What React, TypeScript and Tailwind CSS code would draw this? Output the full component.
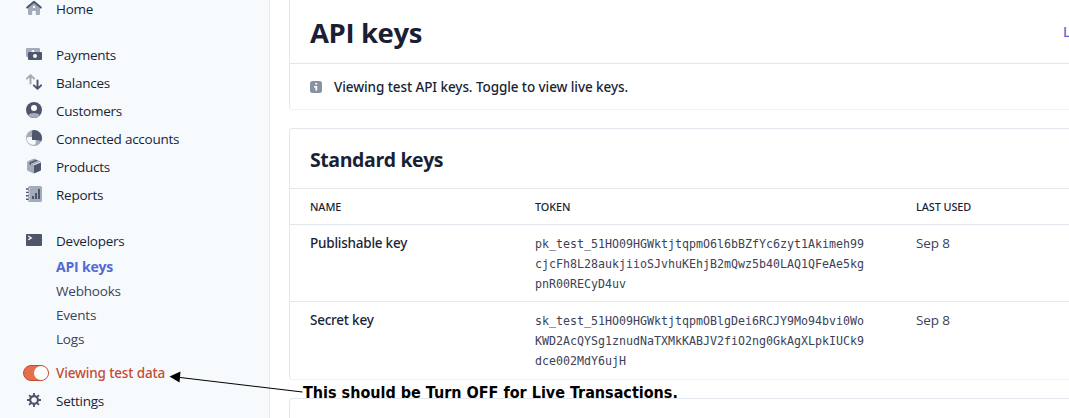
import type { ReactNode } from "react";

const DARK = "#4f566b";
const LIGHT = "#a3acb9";

function Icon({ children }: { children: ReactNode }) {
  return (
    <svg className="mb-0.5 h-4 w-4 shrink-0" viewBox="0 0 16 16" fill="none">
      {children}
    </svg>
  );
}

const HomeIcon = () => (
  <Icon>
    <path d="M2 7.500 8 2.500l6 5V14a1 1 0 0 1-1 1H9.800v-4H6.200v4H3a1 1 0 0 1-1-1z" fill={LIGHT} />
    <rect x="7" y="6" width="2" height="2" fill="#f7fafc" />
    <path d="M1.200 7.600 8 1.800l6.800 5.800" stroke={DARK} strokeWidth="2" strokeLinecap="round" strokeLinejoin="round" />
  </Icon>
);

const PaymentsIcon = () => (
  <Icon>
    <path d="M1 2h12a1 1 0 0 1 1 1v3H2v5H1a1 1 0 0 1-1-1V3a1 1 0 0 1 1-1z" fill={LIGHT} />
    <circle cx="7" cy="5.600" r="1.600" fill="#f7fafc" />
    <rect x="2" y="6" width="14" height="8" rx="1" fill={DARK} />
    <circle cx="9" cy="10" r="2" fill="#f7fafc" />
  </Icon>
);

const BalancesIcon = () => (
  <Icon>
    <path d="M4.500 9.500V1.300M.9 4.600l3.600-3.500 3.600 3.500" stroke={LIGHT} strokeWidth="2" strokeLinecap="round" strokeLinejoin="round" />
    <path d="M11.500 6.500v8.200M7.900 11.400l3.600 3.500 3.600-3.500" stroke={DARK} strokeWidth="2" strokeLinecap="round" strokeLinejoin="round" />
  </Icon>
);

const CustomersIcon = () => (
  <Icon>
    <circle cx="8" cy="8" r="8" fill={DARK} />
    <path d="M2 13.300C3.300 11.800 5.500 11 8 11s4.700.8 6 2.300A8 8 0 0 1 8 16a8 8 0 0 1-6-2.700z" fill={LIGHT} />
    <circle cx="8" cy="6" r="3" fill="#f7fafc" />
  </Icon>
);

const ConnectedIcon = () => (
  <Icon>
    <circle cx="8" cy="8" r="8" fill={LIGHT} />
    <path d="M.8 7.500C2 6.800 4 6.800 6 7.300V10h3.500c.5 2 .3 3.700-.7 4.700C4 15.400.3 12 .8 7.500z" fill="#f7fafc" />
    <path d="M6.500.2A8 8 0 0 1 15.300 11.200C13.500 10.600 12 10 9.500 10H6V5C6 3 6.100 1.500 6.500.2z" fill={DARK} />
  </Icon>
);

const ProductsIcon = () => (
  <Icon>
    <path d="M8 .5 15 3.500 8 6.600 1 3.500z" fill={LIGHT} />
    <path d="M1 3.500 8 6.600v8.900L1.600 12.700a1 1 0 0 1-.6-1z" fill={LIGHT} />
    <path d="M15 4 8 7v8.500l6.400-2.800a1 1 0 0 0 .6-1z" fill={DARK} />
    <path d="M3.300 6.300V4.600L9.800 1.700l2 .8L5 5.500v1.600z" fill={DARK} />
    <path d="M8 7 15 4" stroke="#f7fafc" strokeWidth=".6" />
  </Icon>
);

const ReportsIcon = () => (
  <Icon>
    <rect x="2" y="0" width="14" height="16" rx="1.500" fill={LIGHT} />
    <path d="M1.500 2h2v2h-2zM1.500 5.400h2v2h-2zM1.500 8.800h2v2h-2zM1.500 12.200h2v2h-2z" fill="#f7fafc" />
    <path d="M0 3h2.800M0 6.400h2.800M0 9.800h2.800M0 13.200h2.800" stroke={DARK} strokeWidth="1.400" />
    <path d="M6 10h2v3H6zM9 7h2v6H9zM12 3h2v10h-2z" fill={DARK} />
  </Icon>
);

const DevelopersIcon = () => (
  <Icon>
    <rect x="0" y="2" width="16" height="12" rx="1" fill={DARK} />
    <path d="m2.300 4 3 1.900-3 1.900" stroke="#f7fafc" strokeWidth="1.300" />
  </Icon>
);

const SettingsIcon = () => (
  <Icon>
    <circle cx="8" cy="8" r="3.900" stroke={DARK} strokeWidth="2.200" />
    <path
      d="M8 1v3M8 12v3M1 8h3M12 8h3M3.050 3.050l2.100 2.100M10.850 10.850l2.100 2.100M12.950 3.050l-2.100 2.100M5.150 10.850l-2.100 2.100"
      stroke={DARK}
      strokeWidth="1.900"
    />
  </Icon>
);

function NavItem({ icon, label }: { icon: ReactNode; label: string }) {
  return (
    <a className="flex h-7 items-center gap-[14px] pl-[26px] font-['Open_Sans',sans-serif] text-[13.5px] tracking-[-0.25px] text-[#1a1f36]">
      {icon}
      <span>{label}</span>
    </a>
  );
}

function SubItem({ label, active = false }: { label: string; active?: boolean }) {
  return (
    <a
      className={
        active
          ? "flex h-6 items-center pb-0.5 pl-14 text-[14px] font-bold tracking-[-0.2px] text-[#5469d4]"
          : "flex h-6 items-center pl-14 text-[13.5px] tracking-[-0.2px] text-[#3c4257]"
      }
    >
      {label}
    </a>
  );
}

function Sidebar() {
  return (
    <nav className="h-full w-[270px] shrink-0 border-r border-[#e3e8ee] bg-[#f7fafc] font-['Open_Sans',sans-serif]">
      <div className="-mt-[5px]">
        <NavItem icon={<HomeIcon />} label="Home" />
      </div>
      <div className="mt-[18px]">
        <NavItem icon={<PaymentsIcon />} label="Payments" />
        <NavItem icon={<BalancesIcon />} label="Balances" />
        <NavItem icon={<CustomersIcon />} label="Customers" />
        <NavItem icon={<ConnectedIcon />} label="Connected accounts" />
        <NavItem icon={<ProductsIcon />} label="Products" />
        <NavItem icon={<ReportsIcon />} label="Reports" />
      </div>
      <div className="mt-[18px]">
        <NavItem icon={<DevelopersIcon />} label="Developers" />
        <SubItem label="API keys" active />
        <SubItem label="Webhooks" />
        <SubItem label="Events" />
        <SubItem label="Logs" />
      </div>
      <div className="mt-2">
        <a className="flex h-7 items-center gap-[7px] pl-[23px] font-['Noto_Sans',sans-serif] text-[13.5px] font-medium tracking-[-0.14px] text-[#c44c34]">
          <span className="flex h-4 w-[26px] shrink-0 items-center justify-end rounded-full border border-[#c44c34] bg-[#e56f4a]">
            <span className="h-[14px] w-[14px] rounded-full bg-white" />
          </span>
          <span>Viewing test data</span>
        </a>
        <NavItem icon={<SettingsIcon />} label="Settings" />
      </div>
    </nav>
  );
}

const KEYS = [
  {
    name: "Publishable key",
    token: [
      "pk_test_51HO09HGWktjtqpmO6l6bBZfYc6zyt1Akimeh99",
      "cjcFh8L28aukjiioSJvhuKEhjB2mQwz5b40LAQ1QFeAe5kg",
      "pnR00RECyD4uv",
    ],
    used: "Sep 8",
    row: "h-[77px] border-b border-[#e3e8ee]",
  },
  {
    name: "Secret key",
    token: [
      "sk_test_51HO09HGWktjtqpmOBlgDei6RCJY9Mo94bvi0Wo",
      "KWD2AcQYSg1znudNaTXMkKABJV2fiO2ng0GkAgXLpkIUCk9",
      "dce002MdY6ujH",
    ],
    used: "Sep 8",
    row: "h-[77px]",
  },
];

function KeysTable() {
  return (
    <div>
      <div className="grid h-9 grid-cols-[225px_381px_1fr] items-center border-b border-[#e3e8ee] pt-0.5 pl-5 text-[10.9px] font-medium tracking-[-0.08px]">
        <span>NAME</span>
        <span>TOKEN</span>
        <span>LAST USED</span>
      </div>
      {KEYS.map((k) => (
        <div key={k.name} className={`grid grid-cols-[225px_381px_1fr] pt-2 pl-5 ${k.row}`}>
          <span className="text-[13.5px] leading-5 font-medium tracking-[-0.23px]">{k.name}</span>
          <div className="pt-px font-['DejaVu_Sans_Mono',monospace] text-[11.63px] leading-5 text-[#3c4257]">
            {k.token.map((line) => (
              <div key={line} className="whitespace-nowrap">{line}</div>
            ))}
          </div>
          <span className="font-['Open_Sans',sans-serif] text-[13.5px] leading-5 tracking-[-0.1px] text-[#3c4257]">{k.used}</span>
        </div>
      ))}
    </div>
  );
}

function Annotation() {
  return (
    <div className="absolute top-[370px] left-[168px] flex">
      <svg className="h-6 w-[135px]" viewBox="0 0 135 24">
        <path d="M10 7.200 134.500 22" stroke="#000" strokeWidth="1.100" />
        <path d="M1.500 6.500 12.500 1.500 11.500 12.500z" fill="#000" />
      </svg>
      <span className="mt-[13px] font-['DejaVu_Sans_Condensed','DejaVu_Sans',sans-serif] text-[16px] leading-5 font-bold whitespace-nowrap text-black">
        This should be Turn OFF for Live Transactions.
      </span>
    </div>
  );
}

export default function App() {
  return (
    <div className="relative flex h-[418px] w-[1069px] overflow-hidden bg-white font-['Noto_Sans',sans-serif] text-[#1a1f36]">
      <Sidebar />
      <main className="flex flex-1 flex-col pl-[19px]">
        <section className="h-[110px] rounded-bl border-b border-l border-[#e3e8ee] border-b-[#eff1f4]">
          <div className="flex h-16 items-center justify-between border-b border-[#e3e8ee] pl-5 font-['Open_Sans',sans-serif]">
            <h1 className="pt-[3px] text-[27.5px] leading-8 font-bold tracking-[-0.4px]">API keys</h1>
            <span className="w-[6px] overflow-hidden pt-px font-['Noto_Sans',sans-serif] text-[13.5px] font-medium text-[#5469d4]">L</span>
          </div>
          <div className="flex h-[45px] items-center gap-3 pl-5 text-[13.5px] font-medium tracking-[-0.08px]">
            <svg className="h-3 w-3" viewBox="0 0 12 12">
              <rect width="12" height="12" rx="2.500" fill="#8792a2" />
              <path d="M5.200 2h2v1.600h-2zM4 5h3.200v4.500H5.400V6.500H4z" fill="#fff" />
            </svg>
            <span className="pt-0.5">Viewing test API keys. Toggle to view live keys.</span>
          </div>
        </section>
        <section className="mt-[18px] h-[252px] rounded-l border-y border-l border-[#e3e8ee] border-b-[#eff1f4]">
          <h2 className="flex h-[60px] items-center border-b border-[#e3e8ee] pt-0.5 pl-5 font-['Open_Sans',sans-serif] text-[19.5px] font-bold tracking-[-0.42px]">
            Standard keys
          </h2>
          <KeysTable />
        </section>
        <section className="mt-[18px] h-5 rounded-tl border-t border-l border-[#e3e8ee]" />
      </main>
      <Annotation />
    </div>
  );
}
